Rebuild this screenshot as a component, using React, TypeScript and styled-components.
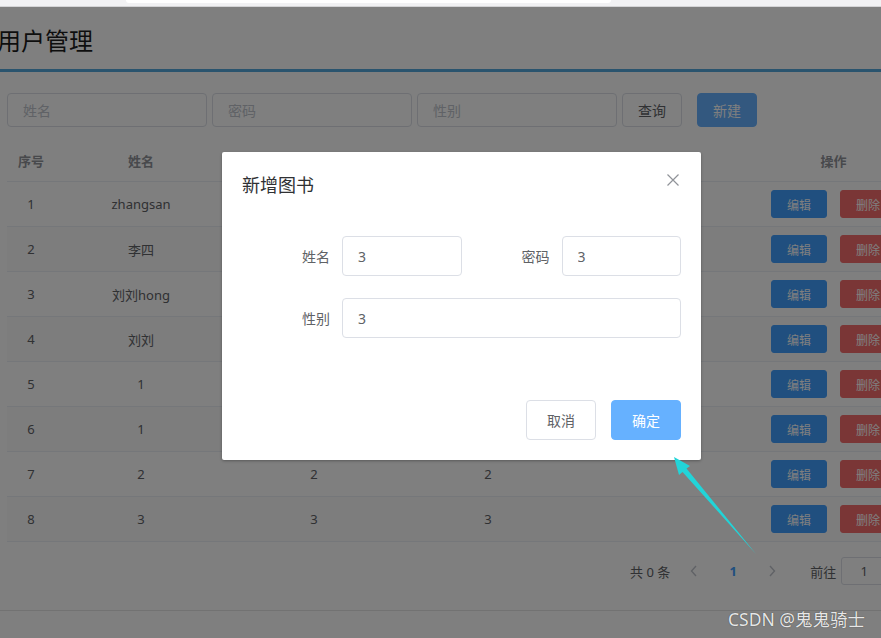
import styled, { createGlobalStyle } from "styled-components";

const GlobalStyle = createGlobalStyle`
  html, body {
    margin: 0;
    padding: 0;
    background: #fff;
    overflow: hidden;
  }
  body {
    font-family: "Noto Sans", "Noto Sans CJK SC", sans-serif;
  }
  * {
    box-sizing: border-box;
  }
`;

interface User {
    id: number;
    name: string;
    password: string;
    sex: string;
}

const users: User[] = [
    { id: 1, name: "zhangsan", password: "", sex: "" },
    { id: 2, name: "李四", password: "", sex: "" },
    { id: 3, name: "刘刘hong", password: "", sex: "" },
    { id: 4, name: "刘刘", password: "", sex: "" },
    { id: 5, name: "1", password: "", sex: "" },
    { id: 6, name: "1", password: "", sex: "" },
    { id: 7, name: "2", password: "2", sex: "2" },
    { id: 8, name: "3", password: "3", sex: "3" },
];

const ChevronIcon = ({ dir }: { dir: "left" | "right" }) => (
    <svg width="8" height="12" viewBox="0 0 8 12">
        <polyline
            points={dir === "left" ? "6,1 1.5,6 6,11" : "2,1 6.5,6 2,11"}
            fill="none"
            stroke="#c0c4cc"
            strokeWidth="1.4"
        />
    </svg>
);

export default function App() {
    return (
        <>
            <GlobalStyle />
            <BrowserBar>
                <AddressBox />
            </BrowserBar>
            <Viewport>
                <Page>
                    <Header>
                        <Title>用户管理</Title>
                    </Header>
                    <Toolbar>
                        <SearchInput placeholder="姓名" />
                        <SearchInput placeholder="密码" />
                        <SearchInput placeholder="性别" />
                        <Button>查询</Button>
                        <Button $variant="primary" $space={10}>
                            新建
                        </Button>
                    </Toolbar>
                    <Table>
                        <HeadRow>
                            <HeadCell>序号</HeadCell>
                            <HeadCell>姓名</HeadCell>
                            <HeadCell>密码</HeadCell>
                            <HeadCell>性别</HeadCell>
                            <HeadCell />
                            <HeadCell>操作</HeadCell>
                        </HeadRow>
                        {users.map((u, i) => (
                            <BodyRow key={u.id} $striped={i % 2 === 1}>
                                <Cell>{u.id}</Cell>
                                <Cell>{u.name}</Cell>
                                <Cell>{u.password}</Cell>
                                <Cell>{u.sex}</Cell>
                                <Cell />
                                <Cell>
                                    <SmallButton $color="#409eff">编辑</SmallButton>
                                    <SmallButton $color="#f56c6c">删除</SmallButton>
                                </Cell>
                            </BodyRow>
                        ))}
                    </Table>
                    <Pagination>
                        <Total>共 0 条</Total>
                        <PageArrow>
                            <ChevronIcon dir="left" />
                        </PageArrow>
                        <PageNumber>1</PageNumber>
                        <PageArrow>
                            <ChevronIcon dir="right" />
                        </PageArrow>
                        <Jump>
                            前往
                            <JumpInput defaultValue="1" />
                            页
                        </Jump>
                    </Pagination>
                    <FooterLine />
                </Page>

                <Overlay />

                <Dialog>
                    <DialogHeader>
                        <DialogTitle>新增图书</DialogTitle>
                        <CloseButton>
                            <svg width="12" height="12" viewBox="0 0 12 12">
                                <path
                                    d="M0.5 0.5 L11.5 11.5 M11.5 0.5 L0.5 11.5"
                                    stroke="#909399"
                                    strokeWidth="1.2"
                                />
                            </svg>
                        </CloseButton>
                    </DialogHeader>
                    <DialogBody>
                        <FormRow $cols={2}>
                            <FormItem>
                                <FormLabel>姓名</FormLabel>
                                <FormInput defaultValue="3" />
                            </FormItem>
                            <FormItem>
                                <FormLabel>密码</FormLabel>
                                <FormInput defaultValue="3" />
                            </FormItem>
                        </FormRow>
                        <FormRow $cols={1}>
                            <FormItem>
                                <FormLabel>性别</FormLabel>
                                <FormInput defaultValue="3" />
                            </FormItem>
                        </FormRow>
                    </DialogBody>
                    <DialogFooter>
                        <DialogButton>取消</DialogButton>
                        <DialogButton $primary>确定</DialogButton>
                    </DialogFooter>
                </Dialog>

                <Arrow width="110" height="110" viewBox="0 0 110 110">
                    <polygon
                        points="14,7 30,16 26.5,18.5 96,104 22.5,22 19,25"
                        fill="#22d4d8"
                    />
                </Arrow>

                <Watermark>CSDN @鬼鬼骑士</Watermark>
            </Viewport>
        </>
    );
}

const BrowserBar = styled.div`
    height: 7px;
    background: #f1f1f3;
    border-bottom: 1px solid #d4d4d6;
    padding-left: 126px;
`;

const AddressBox = styled.div`
    width: 485px;
    height: 3px;
    background: #fff;
    border-radius: 0 0 6px 6px;
`;

const Viewport = styled.div`
    position: relative;
    height: calc(100vh - 7px);
    overflow: hidden;
`;

const Page = styled.div`
    width: 920px;
`;

const Header = styled.div`
    padding: 15px 0 11px;
    border-bottom: 3px solid #55a8dc;
`;

const Title = styled.h1`
    margin: 0 0 0 -3px;
    font-family: "Noto Sans CJK SC", sans-serif;
    font-size: 24px;
    line-height: 36px;
    font-weight: 400;
    color: #1d1d1d;
`;

const Toolbar = styled.div`
    display: flex;
    align-items: center;
    gap: 5px;
    margin-top: 21px;
    padding-left: 7px;
`;

const SearchInput = styled.input`
    width: 200px;
    height: 34px;
    padding: 0 15px;
    border: 1px solid #dcdfe6;
    border-radius: 4px;
    font-family: "Noto Sans CJK SC", sans-serif;
    font-size: 14px;
    color: #606266;
    outline: none;
    &::placeholder {
        color: #c0c4cc;
    }
`;

const Button = styled.button<{ $variant?: "primary"; $space?: number }>`
    width: 60px;
    height: 34px;
    margin-left: ${(p) => p.$space ?? 0}px;
    border: 1px solid ${(p) => (p.$variant === "primary" ? "#66b1ff" : "#dcdfe6")};
    border-radius: 4px;
    background: ${(p) => (p.$variant === "primary" ? "#66b1ff" : "#fff")};
    color: ${(p) => (p.$variant === "primary" ? "#fff" : "#606266")};
    font-family: "Noto Sans CJK SC", sans-serif;
    font-size: 14px;
    padding: 0;
`;

const Table = styled.div`
    margin: 13px 0 0 7px;
    width: 901px;
`;

const HeadRow = styled.div`
    display: grid;
    grid-template-columns: 48px 172px 174px 174px 184px 149px;
    height: 42px;
    border-bottom: 1px solid #ebeef5;
`;

const BodyRow = styled(HeadRow)<{ $striped: boolean }>`
    height: 45px;
    background: ${(p) => (p.$striped ? "#fafafa" : "#fff")};
`;

const Cell = styled.div`
    display: flex;
    align-items: center;
    justify-content: center;
    gap: 13px;
    font-size: 13px;
    color: #606266;
    white-space: nowrap;
`;

const HeadCell = styled(Cell)`
    font-weight: 700;
    color: #909399;
`;

const SmallButton = styled.button<{ $color: string }>`
    width: 56px;
    height: 28px;
    padding: 0;
    border: 1px solid ${(p) => p.$color};
    border-radius: 3px;
    background: ${(p) => p.$color};
    color: #fff;
    font-family: "Noto Sans CJK SC", sans-serif;
    font-size: 12px;
`;

const Pagination = styled.div`
    display: flex;
    align-items: center;
    height: 28px;
    margin-top: 15px;
    padding-left: 630px;
    font-size: 13px;
    color: #606266;
    white-space: nowrap;
`;

const Total = styled.span`
    margin-right: 9px;
`;

const PageArrow = styled.span`
    display: flex;
    align-items: center;
    justify-content: center;
    width: 30px;
    height: 28px;
`;

const PageNumber = styled.span`
    width: 30px;
    margin: 0 9px;
    text-align: center;
    font-weight: 700;
    color: #409eff;
`;

const Jump = styled.span`
    display: flex;
    align-items: center;
    gap: 5px;
    margin-left: 23px;
`;

const JumpInput = styled.input`
    width: 46px;
    height: 28px;
    border: 1px solid #dcdfe6;
    border-radius: 3px;
    text-align: center;
    font-family: "Noto Sans", sans-serif;
    font-size: 13px;
    color: #606266;
    outline: none;
`;

const FooterLine = styled.div`
    margin-top: 25px;
    border-top: 1px solid #e4e4e4;
`;

const Overlay = styled.div`
    position: absolute;
    inset: 0;
    background: rgba(0, 0, 0, 0.5);
`;

const Dialog = styled.div`
    position: absolute;
    left: 222px;
    top: 145px;
    width: 479px;
    background: #fff;
    border-radius: 2px;
    box-shadow: 0 1px 3px rgba(0, 0, 0, 0.3);
`;

const DialogHeader = styled.div`
    position: relative;
    padding: 20px 20px 10px;
`;

const DialogTitle = styled.span`
    display: block;
    font-family: "Noto Sans CJK SC", sans-serif;
    font-size: 18px;
    line-height: 24px;
    color: #303133;
`;

const CloseButton = styled.span`
    position: absolute;
    top: 22px;
    right: 22px;
    display: flex;
`;

const DialogBody = styled.div`
    padding: 30px 20px;
`;

const FormRow = styled.div<{ $cols: number }>`
    display: grid;
    grid-template-columns: repeat(${(p) => p.$cols}, minmax(0, 1fr));
    margin-bottom: 22px;
`;

const FormItem = styled.div`
    display: flex;
    align-items: center;
    min-width: 0;
`;

const FormLabel = styled.label`
    width: 100px;
    flex: none;
    padding-right: 12px;
    text-align: right;
    font-family: "Noto Sans CJK SC", sans-serif;
    font-size: 14px;
    line-height: 40px;
    color: #606266;
`;

const FormInput = styled.input`
    flex: 1;
    width: 0;
    min-width: 0;
    height: 40px;
    padding: 0 15px;
    border: 1px solid #dcdfe6;
    border-radius: 4px;
    font-family: "Noto Sans", sans-serif;
    font-size: 14px;
    color: #606266;
    outline: none;
`;

const DialogFooter = styled.div`
    display: flex;
    justify-content: flex-end;
    gap: 15px;
    padding: 10px 20px 20px;
`;

const DialogButton = styled.button<{ $primary?: boolean }>`
    width: 70px;
    height: 40px;
    padding: 0;
    border: 1px solid ${(p) => (p.$primary ? "#66b1ff" : "#dcdfe6")};
    border-radius: 4px;
    background: ${(p) => (p.$primary ? "#66b1ff" : "#fff")};
    color: ${(p) => (p.$primary ? "#fff" : "#606266")};
    font-family: "Noto Sans CJK SC", sans-serif;
    font-size: 14px;
`;

const Arrow = styled.svg`
    position: absolute;
    left: 660px;
    top: 443px;
`;

const Watermark = styled.div`
    position: absolute;
    right: 16px;
    bottom: 7px;
    font-family: "Noto Sans", "Noto Sans CJK SC", sans-serif;
    font-size: 17.5px;
    color: rgba(255, 255, 255, 0.88);
    text-shadow: 0 0 1px rgba(0, 0, 0, 0.6);
    white-space: nowrap;
`;
